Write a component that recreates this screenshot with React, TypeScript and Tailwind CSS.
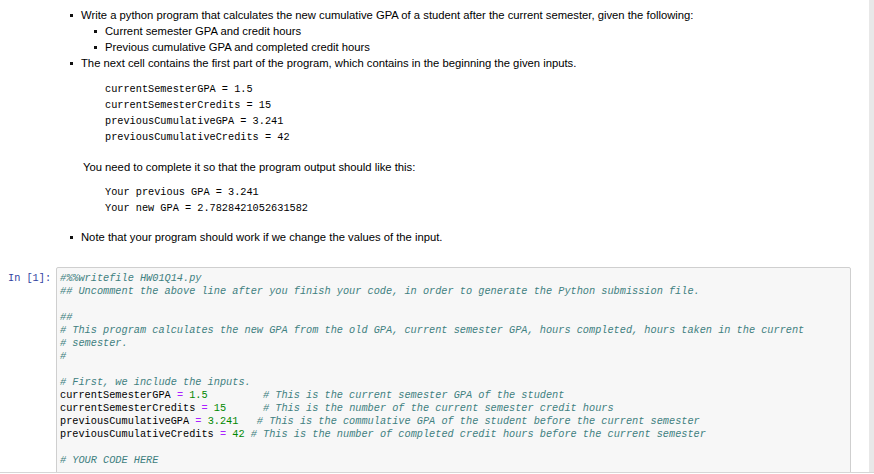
import React from 'react';

const sans = { fontFamily: '"Liberation Sans", Arial, sans-serif' };
const mono = { fontFamily: '"Liberation Mono", "DejaVu Sans Mono", monospace' };

function Bullet({ children, sub = false }: { children: React.ReactNode; sub?: boolean }) {
  return (
    <div className={`flex items-center h-4 ${sub ? 'pl-[94px]' : 'pl-[70px]'}`}>
      <span className="w-[3px] h-[3px] bg-[#111] shrink-0" />
      <span className="ml-[8px] whitespace-nowrap">{children}</span>
    </div>
  );
}

const C = ({ children }: { children: React.ReactNode }) => (
  <span className="text-[#408080] italic">{children}</span>
);
const Op = ({ children }: { children: React.ReactNode }) => (
  <span className="text-[#aa22ff]">{children}</span>
);
const N = ({ children }: { children: React.ReactNode }) => (
  <span className="text-[#008800]">{children}</span>
);

function Assign({ name, value, pad, comment }: { name: string; value: string; pad: string; comment: string }) {
  return (
    <>
      {name} <Op>=</Op> <N>{value}</N>
      {pad}
      <C>{comment}</C>
    </>
  );
}

export default function App() {
  const codeLines: React.ReactNode[] = [
    <C>#%%writefile HW01Q14.py</C>,
    <C>## Uncomment the above line after you finish your code, in order to generate the Python submission file.</C>,
    '',
    <C>##</C>,
    <C># This program calculates the new GPA from the old GPA, current semester GPA, hours completed, hours taken in the current</C>,
    <C># semester.</C>,
    <C>#</C>,
    '',
    <C># First, we include the inputs.</C>,
    <Assign name="currentSemesterGPA" value="1.5" pad="         " comment="# This is the current semester GPA of the student" />,
    <Assign name="currentSemesterCredits" value="15" pad="      " comment="# This is the number of the current semester credit hours" />,
    <Assign name="previousCumulativeGPA" value="3.241" pad="   " comment="# This is the commulative GPA of the student before the current semester" />,
    <Assign name="previousCumulativeCredits" value="42" pad=" " comment="# This is the number of completed credit hours before the current semester" />,
    '',
    <C># YOUR CODE HERE</C>,
  ];

  return (
    <div className="w-[874px] h-[474px] overflow-hidden bg-white flex flex-col">
      <div className="flex flex-1 min-h-0">
        <div className="w-[869px] flex flex-col text-black">
          <div className="pt-[7px] text-[11.25px] leading-4" style={sans}>
            <Bullet>Write a python program that calculates the new cumulative GPA of a student after the current semester, given the following:</Bullet>
            <Bullet sub>Current semester GPA and credit hours</Bullet>
            <Bullet sub>Previous cumulative GPA and completed credit hours</Bullet>
            <Bullet>The next cell contains the first part of the program, which contains in the beginning the given inputs.</Bullet>

            <div className="mt-[10px] pl-[105px] text-[10.25px] leading-4 whitespace-pre" style={mono}>
              <div>currentSemesterGPA = 1.5</div>
              <div>currentSemesterCredits = 15</div>
              <div>previousCumulativeGPA = 3.241</div>
              <div>previousCumulativeCredits = 42</div>
            </div>

            <div className="mt-[14px] pl-[83px] h-4">You need to complete it so that the program output should like this:</div>

            <div className="mt-[9px] pl-[105px] text-[10.25px] leading-4 whitespace-pre" style={mono}>
              <div>Your previous GPA = 3.241</div>
              <div>Your new GPA = 2.7828421052631582</div>
            </div>

            <div className="mt-[13px]">
              <Bullet>Note that your program should work if we change the values of the input.</Bullet>
            </div>
          </div>

          <div className="mt-[22px] flex flex-1 min-h-0 overflow-hidden">
            <div
              className="w-[56px] shrink-0 pt-[5px] pl-[8px] text-[10.25px] leading-[13px] text-[#303f9f]"
              style={mono}
            >
              In [1]:
            </div>
            <div className="w-[795px] h-[260px] shrink-0 bg-[#f7f7f7] border border-[#cfcfcf] rounded-[2px] pt-[4px] pl-[3px]">
              <div className="text-[10.25px] leading-[13px] whitespace-pre text-black" style={mono}>
                {codeLines.map((l, i) => (
                  <div key={i} className="h-[13px]">{l}</div>
                ))}
              </div>
            </div>
          </div>
        </div>
        <div className="w-[5px] bg-[#e8e8e8]" />
      </div>
      <div className="h-px bg-[#d6d6d6] shrink-0" />
      <div className="h-px bg-white shrink-0" />
    </div>
  );
}
